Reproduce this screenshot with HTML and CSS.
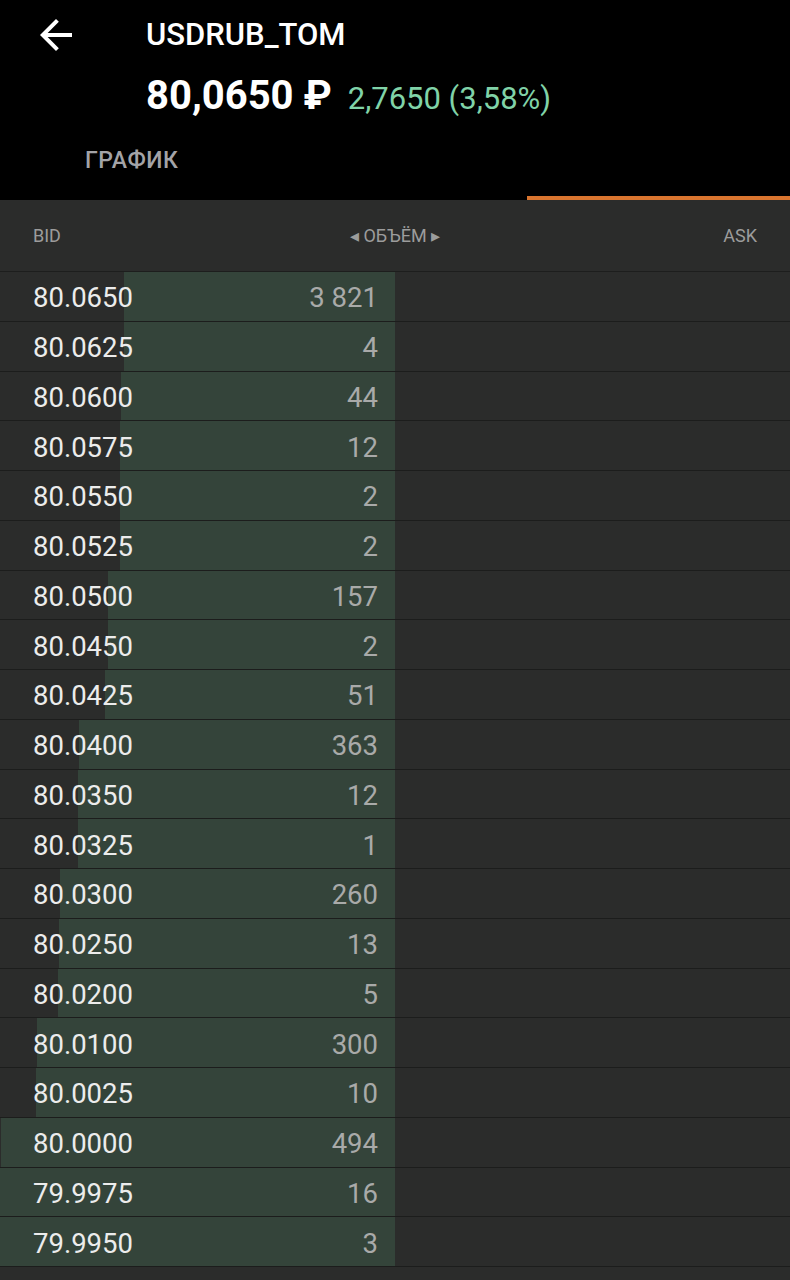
FILE: index.html
```html
<!DOCTYPE html>
<html lang="ru">
<head>
  <meta charset="UTF-8">
  <meta name="viewport" content="width=device-width, initial-scale=1">
  <title>USDRUB_TOM</title>
  <link rel="stylesheet" href="styles.css">
</head>
<body>

<header class="top">
  <div class="title-line">
    <button class="back-btn" aria-label="Назад">
      <svg width="48" height="48" viewBox="0 0 24 24"><path fill="#fff" d="M20 11H7.83l5.59-5.59L12 4l-8 8 8 8 1.41-1.41L7.83 13H20v-2z"/></svg>
    </button>
    <div class="ticker">USDRUB_TOM</div>
  </div>
  <div class="price-line">
    <span class="price">80,0650 ₽</span>
    <span class="change">2,7650 (3,58%)</span>
  </div>
  <nav class="tabs">
    <div class="tab">ГРАФИК</div>
    <div class="tab"></div>
    <div class="tab active"></div>
  </nav>
</header>

<!-- Стакан -->
<div class="book-head">
  <span>BID</span>
  <span class="vol-switch">◂ ОБЪЁМ ▸</span>
  <span>ASK</span>
</div>

<div class="book">
  <div class="row"><div class="bid" style="--w:68.57%"><span class="px">80.0650</span><span class="qty">3 821</span></div><div class="ask"></div></div>
  <div class="row"><div class="bid" style="--w:68.65%"><span class="px">80.0625</span><span class="qty">4</span></div><div class="ask"></div></div>
  <div class="row"><div class="bid" style="--w:69.44%"><span class="px">80.0600</span><span class="qty">44</span></div><div class="ask"></div></div>
  <div class="row"><div class="bid" style="--w:69.65%"><span class="px">80.0575</span><span class="qty">12</span></div><div class="ask"></div></div>
  <div class="row"><div class="bid" style="--w:69.69%"><span class="px">80.0550</span><span class="qty">2</span></div><div class="ask"></div></div>
  <div class="row"><div class="bid" style="--w:69.72%"><span class="px">80.0525</span><span class="qty">2</span></div><div class="ask"></div></div>
  <div class="row"><div class="bid" style="--w:72.54%"><span class="px">80.0500</span><span class="qty">157</span></div><div class="ask"></div></div>
  <div class="row"><div class="bid" style="--w:72.58%"><span class="px">80.0450</span><span class="qty">2</span></div><div class="ask"></div></div>
  <div class="row"><div class="bid" style="--w:73.49%"><span class="px">80.0425</span><span class="qty">51</span></div><div class="ask"></div></div>
  <div class="row"><div class="bid" style="--w:80.01%"><span class="px">80.0400</span><span class="qty">363</span></div><div class="ask"></div></div>
  <div class="row"><div class="bid" style="--w:80.22%"><span class="px">80.0350</span><span class="qty">12</span></div><div class="ask"></div></div>
  <div class="row"><div class="bid" style="--w:80.24%"><span class="px">80.0325</span><span class="qty">1</span></div><div class="ask"></div></div>
  <div class="row"><div class="bid" style="--w:84.91%"><span class="px">80.0300</span><span class="qty">260</span></div><div class="ask"></div></div>
  <div class="row"><div class="bid" style="--w:85.14%"><span class="px">80.0250</span><span class="qty">13</span></div><div class="ask"></div></div>
  <div class="row"><div class="bid" style="--w:85.23%"><span class="px">80.0200</span><span class="qty">5</span></div><div class="ask"></div></div>
  <div class="row"><div class="bid" style="--w:90.61%"><span class="px">80.0100</span><span class="qty">300</span></div><div class="ask"></div></div>
  <div class="row"><div class="bid" style="--w:90.79%"><span class="px">80.0025</span><span class="qty">10</span></div><div class="ask"></div></div>
  <div class="row"><div class="bid" style="--w:99.66%"><span class="px">80.0000</span><span class="qty">494</span></div><div class="ask"></div></div>
  <div class="row"><div class="bid" style="--w:99.95%"><span class="px">79.9975</span><span class="qty">16</span></div><div class="ask"></div></div>
  <div class="row"><div class="bid" style="--w:100%"><span class="px">79.9950</span><span class="qty">3</span></div><div class="ask"></div></div>
</div>

</body>
</html>
```

FILE: styles.css
```css
body {
  margin: 0;
  padding: 0;
  background-color: #2b2c2b;
  font-family: Roboto, "Noto Sans", sans-serif;
  color: #e9e9e9;
}

.top {
  background-color: #000;
  color: white;
}

.title-line {
  display: flex;
  align-items: center;
  height: 66px;
}

.back-btn {
  width: 146px;
  height: 48px;
  padding: 0 0 0 32px;
  margin-top: 4px;
  border: none;
  background: none;
  text-align: left;
  cursor: pointer;
}

.back-btn svg {
  display: block;
}

.ticker {
  font-size: 31px;
  font-weight: 500;
  line-height: 36px;
  margin-top: 4px;
}

.price-line {
  display: flex;
  align-items: baseline;
  gap: 16px;
  padding-left: 146px;
  margin-top: 6px;
  height: 48px;
}

.price {
  font-size: 40px;
  font-weight: 700;
  line-height: 48px;
}

.change {
  font-size: 31px;
  color: #80d3a8;
  line-height: 48px;
}

.tabs {
  display: flex;
  height: 80px;
}

.tab {
  flex: 1;
  text-align: center;
  padding-top: 27px;
  font-size: 23px;
  font-weight: 500;
  letter-spacing: 0.5px;
  line-height: 28px;
  color: #a3a3a7;
  box-sizing: border-box;
  border-bottom: 4px solid transparent;
}

.tab.active {
  border-bottom-color: #d9752f;
}

.book-head {
  display: flex;
  justify-content: space-between;
  align-items: center;
  height: 71px;
  padding: 0 33px;
  font-size: 18px;
  color: #9c9c9c;
  border-bottom: 1px solid #1d1e1d;
}

.vol-switch {
  font-size: 18px;
  margin-left: 6px;
}

.row {
  display: flex;
  height: 49.75px;
  box-sizing: border-box;
  border-bottom: 1px solid #1c1d1c;
}

.bid {
  width: 395px;
  display: flex;
  justify-content: space-between;
  align-items: center;
  padding: 3px 17px 0 33px;
  box-sizing: border-box;
  font-size: 27.5px;
  background: linear-gradient(to left, #34443a var(--w), transparent var(--w));
}

.px {
  color: #ececec;
}

.qty {
  color: #a9aaa9;
}

.ask {
  flex: 1;
}
```
